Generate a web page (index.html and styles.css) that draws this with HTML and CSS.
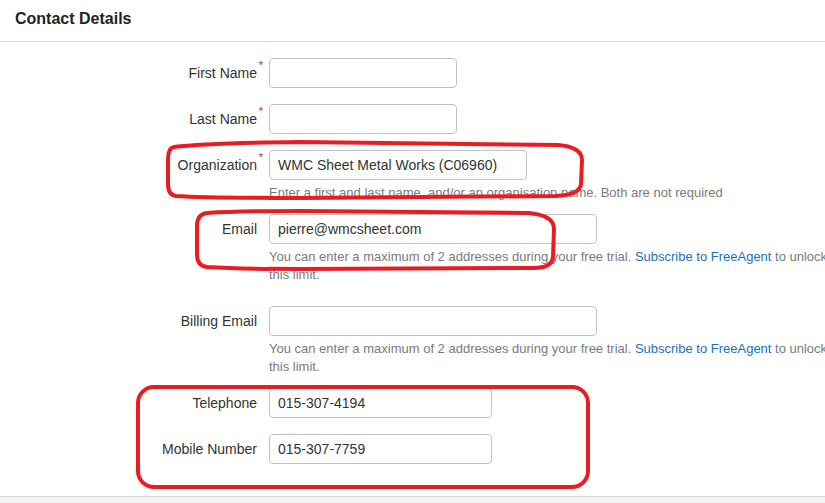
FILE: index.html
```
<!DOCTYPE html>
<html lang="en">
<head>
    <meta charset="UTF-8">
    <title>Contact Details</title>
    <link rel="stylesheet" href="styles.css">
</head>
<body>
    <div class="panel">
        <div class="panel-heading">Contact Details</div>
        <div class="panel-body">
            <div class="form-group">
                <label class="control-label">First Name<span class="req">*</span></label>
                <div class="controls"><input type="text" class="input input-name"></div>
            </div>
            <div class="form-group">
                <label class="control-label">Last Name<span class="req">*</span></label>
                <div class="controls"><input type="text" class="input input-name"></div>
            </div>
            <div class="form-group with-help">
                <label class="control-label">Organization<span class="req">*</span></label>
                <div class="controls">
                    <input type="text" class="input input-org" value="WMC Sheet Metal Works (C06960)">
                    <p class="help-block">Enter a first and last name, and/or an organisation name. Both are not required</p>
                </div>
            </div>
            <div class="form-group with-help extra-space">
                <label class="control-label">Email</label>
                <div class="controls">
                    <input type="text" class="input input-email" value="pierre@wmcsheet.com">
                    <p class="help-block">You can enter a maximum of 2 addresses during your free trial. <a href="#">Subscribe to FreeAgent</a> to unlock this limit.</p>
                </div>
            </div>
            <div class="form-group with-help">
                <label class="control-label">Billing Email</label>
                <div class="controls">
                    <input type="text" class="input input-email">
                    <p class="help-block">You can enter a maximum of 2 addresses during your free trial. <a href="#">Subscribe to FreeAgent</a> to unlock this limit.</p>
                </div>
            </div>
            <div class="form-group">
                <label class="control-label">Telephone</label>
                <div class="controls"><input type="text" class="input input-phone" value="015-307-4194"></div>
            </div>
            <div class="form-group">
                <label class="control-label">Mobile Number</label>
                <div class="controls"><input type="text" class="input input-phone" value="015-307-7759"></div>
            </div>
        </div>
    </div>

    <!-- red markup drawn over the screenshot -->
    <svg class="annotations" width="825" height="503" viewBox="0 0 825 503">
        <path d="M174 147 Q205 143 300 142 L558 145 Q582 147 582 160 L581 184 Q580 195 556 196 L300 198 Q205 198 176 196 Q168 195 168 184 L168 159 Q168 148 174 147 Z"/>
        <path d="M207 213 Q240 211 300 211 L528 213 Q554 215 554 229 L553 257 Q552 268 534 268 L300 269 Q240 269 207 267 Q197 266 197 254 L197 226 Q197 214 207 213 Z"/>
        <rect x="138" y="387" width="450" height="100" rx="16" ry="16"/>
    </svg>
</body>
</html>
```

FILE: styles.css
```
html, body {
    overflow: hidden;
}
body {
    margin: 0;
    font-family: "Liberation Sans", Arial, sans-serif;
    color: #333;
    background-color: #f4f4f5;
    position: relative;
}
.panel {
    background-color: #fff;
    border-bottom: 1px solid #d6d6d6;
    box-shadow: 0 1px 1px rgba(0, 0, 0, 0.06);
}
.panel-heading {
    font-size: 16px;
    font-weight: bold;
    line-height: 20px;
    padding: 9px 15px 12px;
    color: #222;
    border-bottom: 1px solid #dedede;
}
.panel-body {
    padding: 16px 0 32px;
}
.form-group {
    display: grid;
    grid-template-columns: 257px 1fr;
    column-gap: 12px;
    align-items: start;
    margin-bottom: 16px;
}
.form-group:last-child {
    margin-bottom: 0;
}
.form-group.with-help {
    margin-bottom: 12px;
}
.form-group.extra-space {
    margin-bottom: 22px;
}
.control-label {
    position: relative;
    text-align: right;
    font-size: 14px;
    line-height: 30px;
    color: #333;
}
.req {
    position: absolute;
    right: -6px;
    top: 2px;
    font-size: 11px;
    line-height: 11px;
    color: #d2232a;
}
.controls {
    min-width: 0;
}
.input {
    display: block;
    box-sizing: border-box;
    height: 30px;
    padding: 0 8px;
    border: 1px solid #bfc3c7;
    border-radius: 4px;
    font-family: "Liberation Sans", Arial, sans-serif;
    font-size: 14px;
    color: #333;
    background-color: #fff;
}
.input-name {
    width: 188px;
}
.input-org {
    width: 258px;
}
.input-email {
    width: 328px;
}
.input-phone {
    width: 223px;
}
.help-block {
    width: 570px;
    margin: 4px 0 0;
    font-size: 13px;
    line-height: 18px;
    color: #7a7a7a;
}
.help-block a {
    color: #1f6eb4;
    text-decoration: none;
}
.annotations {
    position: absolute;
    top: 0;
    left: 0;
    pointer-events: none;
    fill: none;
    stroke: #e91c24;
    stroke-width: 4;
    stroke-linejoin: round;
}
```
